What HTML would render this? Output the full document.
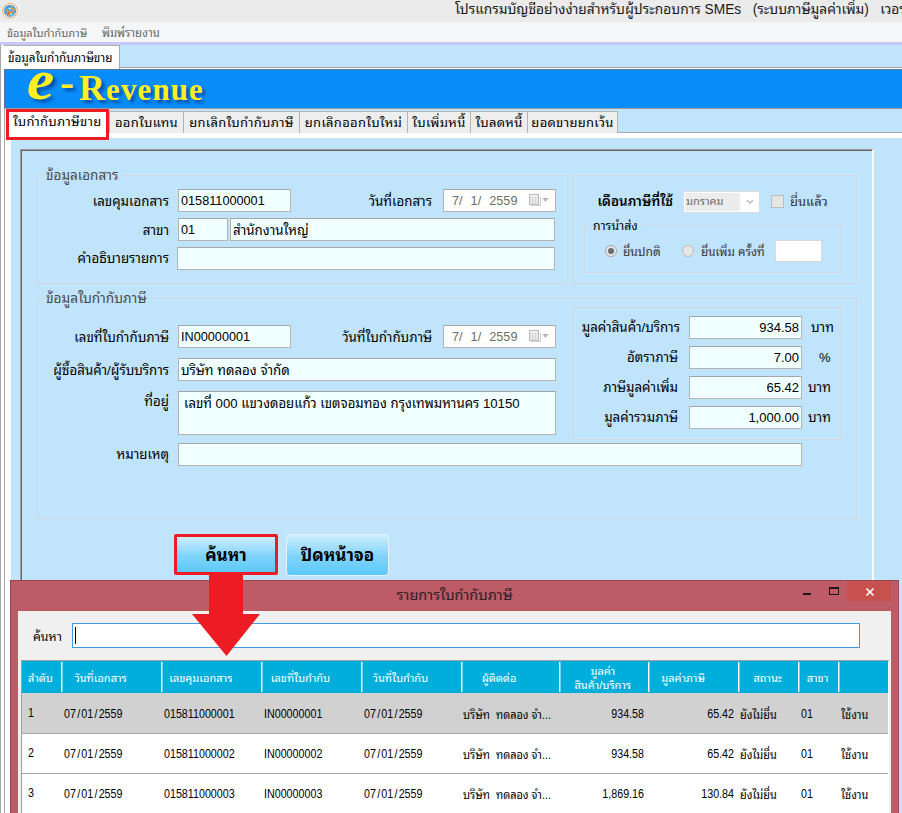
<!DOCTYPE html>
<html lang="th">
<head>
<meta charset="utf-8">
<title>e-Revenue</title>
<style>
*{box-sizing:border-box;margin:0;padding:0}
html,body{width:902px;height:813px;overflow:hidden;background:#c1e4fd}
body{position:relative;font-family:"Liberation Sans","Noto Sans Thai Looped","Loma","Noto Sans Thai","Noto Sans CJK SC",sans-serif;font-size:13px;color:#000}
.abs,.abs *{position:absolute}
.abs{left:0;top:0;width:902px;height:813px;overflow:hidden}
.t{white-space:nowrap;line-height:1}
.titlebar{left:0;top:0;width:902px;height:22px;background:#ebebeb}
.menubar{left:0;top:22px;width:902px;height:21px;background:#f5f6f8}
.inp{background:#f0ffff;border:1px solid #b7b3ae;border-top-color:#a6a6a6;height:23px}
.inp.dis{background:#fff}
.lbl{overflow-x:clip;text-align:right;white-space:nowrap;line-height:1;font-size:13.3px}
.gb{border:1px solid #d3dadf}
.tab{top:111px;height:22px;background:#eeeeee;border:1px solid #b4b4b4;border-bottom:none;font-size:13px;white-space:nowrap;text-align:center;line-height:22px;letter-spacing:.3px;overflow:hidden}
.hc{overflow-x:clip;top:662px;height:31px;color:#fff;font-size:11px;text-align:center;white-space:nowrap;line-height:32px}
.cell{font-size:12px;white-space:nowrap;line-height:1}
.cell.n{font-size:12.6px;transform:scaleX(.85);transform-origin:0 0}
.cell.th{font-size:12.2px;transform:scaleX(.9);transform-origin:0 0}
.cell i{position:static;font-style:normal;margin:0 1.45px}
.cell.n.r{text-align:right;transform-origin:100% 0}
</style>
</head>
<body>
<div class="abs">
  <!-- title bar -->
  <div class="titlebar"></div>
  <svg style="left:0;top:0" width="22" height="22" viewBox="0 0 22 22"><circle cx="10" cy="10.8" r="9.6" fill="#f7f5f6" opacity=".8"/><circle cx="10" cy="10.8" r="7.5" fill="#fbeee2" stroke="#e8873c" stroke-width="1.3" stroke-dasharray="1.1 1.25"/><circle cx="10" cy="10.8" r="6.1" fill="#3fa6e6"/><path d="M6.2 9.5l1.6 1.2-.6 3 1.8 1.6M11 6.5l.8 2.2 2.4.6-1.4 2.6 1 2.2M8.8 11.5l2.4 1.4" stroke="#ef9a3f" stroke-width="1.5" fill="none" stroke-linecap="round"/><path d="M9 8.2l2 1M10.5 13.5l1.2 1.6" stroke="#fbe9dc" stroke-width="1.1" fill="none" stroke-linecap="round"/><circle cx="8.3" cy="13.2" r=".9" fill="#d8452e"/></svg>
  <div class="t" style="left:455px;top:3px;font-size:13.75px;color:#1a1a1a;margin-left:-2px;padding:0 2px;max-width:475px;overflow-x:clip">โปรแกรมบัญชีอย่างง่ายสำหรับผู้ประกอบการ SMEs&nbsp;&nbsp; (ระบบภาษีมูลค่าเพิ่ม)&nbsp;&nbsp; เวอร์ชัน</div>
  <!-- menu bar -->
  <div class="menubar"></div>
  <div class="t" style="left:7px;top:28px;font-size:10.9px;color:#666;margin-left:-2px;padding:0 2px;max-width:88px;overflow-x:clip">ข้อมูลใบกำกับภาษี</div>
  <div class="t" style="left:102px;top:28px;font-size:11.3px;color:#666;margin-left:-2px;padding:0 2px;max-width:66px;overflow-x:clip">พิมพ์รายงาน</div>
  <div style="left:0;top:42px;width:902px;height:3px;background:#c6c9f7"></div>
  <!-- outer tab -->
  <div style="left:0;top:67px;width:902px;height:3px;background:#fff;border-top:1px solid #a0a0a0"></div>
  <div style="left:1px;top:45px;width:119px;height:25px;background:#fff;border-top:1px solid #b0b0b0;border-right:1px solid #a8a8a8"></div>
  <div class="t" style="left:8px;top:52px;font-size:11.7px;color:#000;margin-left:-2px;padding:0 2px;max-width:112px;overflow-x:clip">ข้อมูลใบกำกับภาษีขาย</div>
  <!-- banner -->
  <div style="left:4px;top:69px;width:898px;height:40px;background:#088dfb;border-top:1px solid #56789c;border-bottom:1px solid #56789c;border-left:1px solid #56789c"></div>
  <div class="t" style="left:27px;top:51px;font-family:'Liberation Serif',serif;font-style:italic;font-weight:bold;font-size:58px;color:#ffee22;text-shadow:3px 3px 3px rgba(0,20,90,.5);transform:scaleX(1.06);transform-origin:0 0">e</div>
  <div class="t" style="left:60px;top:61px;font-family:'Liberation Serif',serif;font-weight:bold;font-size:42px;color:#ffee22;text-shadow:3px 3px 3px rgba(0,20,90,.5)">-</div>
  <div class="t" style="left:79px;top:68px;font-family:'Liberation Serif',serif;font-weight:bold;font-size:31px;letter-spacing:1.1px;line-height:40px;color:#ffee22;text-shadow:3px 3px 3px rgba(0,20,90,.5)"><span style="position:static;font-size:36px">R</span>evenue</div>
  <!-- left window borders -->
  <div style="left:0;top:45px;width:4px;height:768px;background:#fff;border-left:1px solid #a6a6a6"></div>
  <div style="left:4px;top:108px;width:7px;height:705px;background:#fff;border-left:1px solid #a8a8a8"></div>
  <!-- inner tabs -->
  <div style="left:4px;top:108px;width:898px;height:1px;background:#9c9c9c"></div>
  <div style="left:5px;top:132px;width:897px;height:6px;background:#fff"></div><div style="left:109px;top:132px;width:793px;height:1px;background:#a8a8a8"></div>
  <div class="tab" style="left:109px;width:75px">ออกใบแทน</div>
  <div class="tab" style="left:183px;width:117px">ยกเลิกใบกำกับภาษี</div>
  <div class="tab" style="left:299px;width:109px">ยกเลิกออกใบใหม่</div>
  <div class="tab" style="left:407px;width:64px">ใบเพิ่มหนี้</div>
  <div class="tab" style="left:470px;width:58px">ใบลดหนี้</div>
  <div class="tab" style="left:527px;width:91px">ยอดขายยกเว้น</div>
  <div style="left:6px;top:109px;width:103px;height:31px;background:#fff;border:3px solid #ed1c24"></div>
  <div class="t" style="left:13px;top:115px;font-size:13px;letter-spacing:.25px;margin-left:-2px;padding:0 2px;max-width:96px;overflow-x:clip">ใบกำกับภาษีขาย</div>
  <!-- panel -->
  <div style="left:20px;top:149px;width:854px;height:664px;border-top:1px solid #9e9e9e;border-left:1px solid #9e9e9e;border-right:2px solid #fff"></div><div style="left:21px;top:150px;width:851px;height:663px;border-top:1px solid #666;border-left:1px solid #666"></div>
  <!-- group boxes -->
  <div class="gb" style="left:37px;top:175px;width:531px;height:109px"></div>
  <div class="t" style="left:43px;top:169px;background:#c1e4fd;padding:0 3px;font-size:13.5px;color:#4a4a4a;max-width:81px;overflow-x:clip">ข้อมูลเอกสาร</div>
  <div class="gb" style="left:573px;top:175px;width:284px;height:109px"></div>
  <div class="gb" style="left:37px;top:298px;width:820px;height:221px"></div>
  <div class="t" style="left:43px;top:292px;background:#c1e4fd;padding:0 3px;font-size:13.7px;color:#4a4a4a;max-width:110px;overflow-x:clip">ข้อมูลใบกำกับภาษี</div>
  <div class="gb" style="left:573px;top:307px;width:269px;height:133px"></div>
  <div class="gb" style="left:584px;top:225px;width:258px;height:48px"></div>
  <div class="t" style="left:590px;top:220px;background:#c1e4fd;padding:0 3px;font-size:12.3px;max-width:54px;overflow-x:clip">การนำส่ง</div>
  <!-- doc fields -->
  <div class="lbl" style="left:40px;width:129px;top:194.5px">เลขคุมเอกสาร</div>
  <div class="inp" style="left:178px;top:189px;width:113px"></div>
  <div class="t" style="left:181px;top:194.5px;font-size:12.7px">015811000001</div>
  <div class="lbl" style="left:340px;width:92px;top:194.5px">วันที่เอกสาร</div>
  <div class="inp dis" style="left:443px;top:189px;width:113px"></div>
  <div class="t" style="left:452px;top:195px;font-size:12.7px;color:#6d6d6d;word-spacing:4.5px">7/ 1/ 2559</div><svg style="left:528px;top:193px" width="22" height="14" viewBox="0 0 22 14"><rect x="1.5" y="1.5" width="9" height="10" fill="#f2f2f2" stroke="#b9b9b9"/><path d="M3 12.5H12.5V4" fill="none" stroke="#d0d0d0"/><path d="M2 4.5H10M2 7H10M2 9.5H10M4.5 4V12M7.5 4V12" stroke="#cfcfcf" stroke-width=".8" fill="none"/><path d="M14.5 5H20.5L17.5 9Z" fill="#b4b4b4"/></svg>
  <div class="lbl" style="left:40px;width:129px;top:223.5px">สาขา</div>
  <div class="inp" style="left:178px;top:218px;width:50px"></div>
  <div class="t" style="left:181px;top:223.5px;font-size:12.7px">01</div>
  <div class="inp" style="left:230px;top:218px;width:325px"></div>
  <div class="t" style="left:233px;top:223.5px;font-size:13.3px;margin-left:-2px;padding:0 2px;max-width:84px;overflow-x:clip">สำนักงานใหญ่</div>
  <div class="lbl" style="left:40px;width:129px;top:252px">คำอธิบายรายการ</div>
  <div class="inp" style="left:177px;top:247px;width:378px"></div>
  <!-- tax month -->
  <div class="lbl" style="left:580px;width:93px;top:195px;font-weight:600;font-size:13.4px">เดือนภาษีที่ใช้</div>
  <div style="left:683px;top:191px;width:77px;height:22px;background:#fff;border:1px solid #dcdcdc"></div><div style="left:685px;top:193px;width:55px;height:18px;background:#ececec"></div>
  <div class="t" style="left:686px;top:196px;font-size:11px;color:#6d6d6d;margin-left:-2px;padding:0 2px;max-width:46px;overflow-x:clip">มกราคม</div>
  <svg style="left:745px;top:198px" width="10" height="8" viewBox="0 0 10 8"><path d="M2 2 L5 5.2 L8 2" fill="none" stroke="#b4b4b4" stroke-width="1.2"/></svg>
  <div style="left:771px;top:195px;width:13px;height:13px;background:#e6e6e6;border:1px solid #bcbcbc"></div>
  <div class="t" style="left:790px;top:195px;font-size:13px;color:#333;margin-left:-2px;padding:0 2px;max-width:46px;overflow-x:clip">ยื่นแล้ว</div>
  <div style="left:605px;top:245px;width:12px;height:12px;border-radius:50%;background:#e6e6e6;border:1px solid #a8a8a8"></div>
  <div style="left:608px;top:248px;width:6px;height:6px;border-radius:50%;background:#6a6a6a"></div>
  <div class="t" style="left:623px;top:246px;font-size:12px;color:#333;margin-left:-2px;padding:0 2px;max-width:46px;overflow-x:clip">ยื่นปกติ</div>
  <div style="left:682px;top:245px;width:12px;height:12px;border-radius:50%;background:#e6e6e6;border:1px solid #bcbcbc"></div>
  <div class="t" style="left:701px;top:246px;font-size:11.7px;color:#333;margin-left:-2px;padding:0 2px;max-width:72px;overflow-x:clip">ยื่นเพิ่ม ครั้งที่</div>
  <div style="left:775px;top:240px;width:47px;height:22px;background:#fff;border:1px solid #d9d9d9"></div>
  <!-- invoice fields -->
  <div class="lbl" style="left:40px;width:129px;top:330.5px">เลขที่ใบกำกับภาษี</div>
  <div class="inp" style="left:178px;top:325px;width:113px"></div>
  <div class="t" style="left:181px;top:330.5px;font-size:12.7px">IN00000001</div>
  <div class="lbl" style="left:320px;width:112px;top:330.5px">วันที่ใบกำกับภาษี</div>
  <div class="inp dis" style="left:443px;top:325px;width:113px"></div>
  <div class="t" style="left:452px;top:331px;font-size:12.7px;color:#6d6d6d;word-spacing:4.5px">7/ 1/ 2559</div><svg style="left:528px;top:329px" width="22" height="14" viewBox="0 0 22 14"><rect x="1.5" y="1.5" width="9" height="10" fill="#f2f2f2" stroke="#b9b9b9"/><path d="M3 12.5H12.5V4" fill="none" stroke="#d0d0d0"/><path d="M2 4.5H10M2 7H10M2 9.5H10M4.5 4V12M7.5 4V12" stroke="#cfcfcf" stroke-width=".8" fill="none"/><path d="M14.5 5H20.5L17.5 9Z" fill="#b4b4b4"/></svg>
  <div class="lbl" style="left:40px;width:129px;top:363.5px">ผู้ซื้อสินค้า/ผู้รับบริการ</div>
  <div class="inp" style="left:178px;top:358px;width:378px"></div>
  <div class="t" style="left:181px;top:363.5px;font-size:13.3px;margin-left:-2px;padding:0 2px;max-width:117px;overflow-x:clip">บริษัท ทดลอง จำกัด</div>
  <div class="lbl" style="left:40px;width:129px;top:395px">ที่อยู่</div>
  <div class="inp" style="left:178px;top:391px;width:378px;height:44px"></div>
  <div class="t" style="left:184px;top:397px;font-size:13.2px;margin-left:-2px;padding:0 2px;max-width:344px;overflow-x:clip">เลขที่ 000 แขวงดอยแก้ว เขตจอมทอง กรุงเทพมหานคร 10150</div>
  <div class="lbl" style="left:40px;width:129px;top:448px">หมายเหตุ</div>
  <div class="inp" style="left:178px;top:443px;width:624px"></div>
  <!-- amounts -->
  <div class="lbl" style="left:560px;width:120px;top:321px">มูลค่าสินค้า/บริการ</div>
  <div class="inp" style="left:689px;top:316px;width:113px"></div>
  <div class="t" style="left:689px;width:110px;text-align:right;top:321px;font-size:13px">934.58</div>
  <div class="t" style="left:811px;top:321px;font-size:13.3px;margin-left:-2px;padding:0 2px;max-width:31px;overflow-x:clip">บาท</div>
  <div class="lbl" style="left:560px;width:118px;top:351px">อัตราภาษี</div>
  <div class="inp" style="left:689px;top:346px;width:113px"></div>
  <div class="t" style="left:689px;width:110px;text-align:right;top:351px;font-size:13px">7.00</div>
  <div class="t" style="left:819px;top:351px;font-size:13px">%</div>
  <div class="lbl" style="left:560px;width:118px;top:381px">ภาษีมูลค่าเพิ่ม</div>
  <div class="inp" style="left:689px;top:376px;width:113px"></div>
  <div class="t" style="left:689px;width:110px;text-align:right;top:381px;font-size:13px">65.42</div>
  <div class="t" style="left:808px;top:381px;font-size:13.3px;margin-left:-2px;padding:0 2px;max-width:31px;overflow-x:clip">บาท</div>
  <div class="lbl" style="left:560px;width:118px;top:411px">มูลค่ารวมภาษี</div>
  <div class="inp" style="left:689px;top:406px;width:113px"></div>
  <div class="t" style="left:689px;width:110px;text-align:right;top:411px;font-size:13px">1,000.00</div>
  <div class="t" style="left:808px;top:411px;font-size:13.3px;margin-left:-2px;padding:0 2px;max-width:31px;overflow-x:clip">บาท</div>
  <!-- buttons -->
  <div style="left:174px;top:534px;width:104px;height:41px;background:linear-gradient(#cdeeff,#7fd3fb 55%,#5cc9fa);border:3px solid #ed1c24;border-radius:2px"></div>
  <div class="t" style="left:174px;width:104px;text-align:center;top:547px;font-size:17px;font-weight:bold;overflow-x:clip">ค้นหา</div>
  <div style="left:286px;top:534px;width:103px;height:42px;background:linear-gradient(#cdeeff,#7fd3fb 55%,#5cc9fa);border:1px solid #e4f3fc;border-radius:4px"></div>
  <div class="t" style="left:286px;width:103px;text-align:center;top:547px;font-size:17px;font-weight:bold;overflow-x:clip">ปิดหน้าจอ</div>
  <!-- dialog -->
  <div style="left:10px;top:580px;width:889px;height:233px;background:#bd5b66;border-top:1px solid #9a4650;border-left:1px solid #9a4650;border-right:1px solid #a24c57"></div>
  <div class="t" style="left:10px;width:889px;text-align:center;top:588px;font-size:14.5px;color:#2e2024;overflow-x:clip">รายการใบกำกับภาษี</div>
  <div style="left:803px;top:593px;width:8px;height:2px;background:#1a1a1a"></div>
  <div style="left:829px;top:587px;width:10px;height:8px;border:1px solid #1a1a1a;border-top-width:2px"></div>
  <div style="left:847px;top:581px;width:44px;height:20px;background:#c8504f"></div>
  <svg style="left:865px;top:587px" width="10" height="10" viewBox="0 0 10 10"><path d="M1.5 1.5 L8.5 8.5 M8.5 1.5 L1.5 8.5" stroke="#fff" stroke-width="1.6" fill="none"/></svg>
  <div style="left:18px;top:611px;width:873px;height:202px;background:#f0f0f0"></div>
  <div class="t" style="left:33px;top:631px;font-size:12.4px;margin-left:-2px;padding:0 2px;max-width:37px;overflow-x:clip">ค้นหา</div>
  <div style="left:72px;top:623px;width:788px;height:25px;background:#fff;border:1px solid #3f9be6"></div>
  <div style="left:75px;top:627px;width:1px;height:17px;background:#000"></div>
  <!-- grid -->
  <div style="left:21px;top:660px;width:868px;height:153px;background:#fff;border-top:1px solid #a0a0a0;border-left:1px solid #a0a0a0"></div>
  <div style="left:22px;top:661px;width:866px;height:32px;background:#00aedb"></div>
  <div class="hc" style="left:24.0px;width:33.0px">ลำดับ</div>
  <div class="hc" style="left:63.0px;width:75.2px">วันที่เอกสาร</div>
  <div class="hc" style="left:163.0px;width:75.6px">เลขคุมเอกสาร</div>
  <div class="hc" style="left:263.0px;width:75.0px">เลขที่ใบกำกับ</div>
  <div class="hc" style="left:363.0px;width:74.8px">วันที่ใบกำกับ</div>
  <div class="hc" style="left:463.0px;width:72.0px">ผู้ติดต่อ</div>
  <div class="hc" style="left:560.5px;width:84.6px;line-height:14px;padding-top:2px">มูลค่า<br>สินค้า/บริการ</div>
  <div class="hc" style="left:650.0px;width:66.2px">มูลค่าภาษี</div>
  <div class="hc" style="left:740.0px;width:55.8px">สถานะ</div>
  <div class="hc" style="left:800.0px;width:35.0px">สาขา</div>
  <div style="left:61px;top:662px;width:2px;height:30px;background:linear-gradient(90deg,#fff 50%,rgba(255,255,255,.45) 50%)"></div>
  <div style="left:161px;top:662px;width:2px;height:30px;background:linear-gradient(90deg,#fff 50%,rgba(255,255,255,.45) 50%)"></div>
  <div style="left:261px;top:662px;width:2px;height:30px;background:linear-gradient(90deg,#fff 50%,rgba(255,255,255,.45) 50%)"></div>
  <div style="left:361px;top:662px;width:2px;height:30px;background:linear-gradient(90deg,#fff 50%,rgba(255,255,255,.45) 50%)"></div>
  <div style="left:461px;top:662px;width:2px;height:30px;background:linear-gradient(90deg,#fff 50%,rgba(255,255,255,.45) 50%)"></div>
  <div style="left:558.5px;top:662px;width:2px;height:30px;background:linear-gradient(90deg,#fff 50%,rgba(255,255,255,.45) 50%)"></div>
  <div style="left:648px;top:662px;width:2px;height:30px;background:linear-gradient(90deg,#fff 50%,rgba(255,255,255,.45) 50%)"></div>
  <div style="left:738px;top:662px;width:2px;height:30px;background:linear-gradient(90deg,#fff 50%,rgba(255,255,255,.45) 50%)"></div>
  <div style="left:798px;top:662px;width:2px;height:30px;background:linear-gradient(90deg,#fff 50%,rgba(255,255,255,.45) 50%)"></div>
  <div style="left:838px;top:662px;width:2px;height:30px;background:linear-gradient(90deg,#fff 50%,rgba(255,255,255,.45) 50%)"></div>
  <div style="left:22px;top:693px;width:866px;height:40px;background:#d1d1d1"></div>
  <div style="left:22px;top:733px;width:866px;height:1px;background:#a6a6a6"></div>
  <div style="left:22px;top:773px;width:866px;height:1px;background:#a6a6a6"></div>
  <div class="cell n" style="left:28px;top:707px">1</div>
  <div class="cell n" style="left:64px;top:708px">07<i>/</i>01<i>/</i>2559</div>
  <div class="cell n" style="left:164px;top:708px">015811000001</div>
  <div class="cell n" style="left:264px;top:708px">IN00000001</div>
  <div class="cell n" style="left:364px;top:708px">07<i>/</i>01<i>/</i>2559</div>
  <div class="cell th" style="left:463px;top:709px;max-width:101px;overflow-x:clip">บริษัท&nbsp; ทดลอง จำ...</div>
  <div class="cell n r" style="left:560px;width:84px;top:708px">934.58</div>
  <div class="cell n r" style="left:650px;width:84px;top:708px">65.42</div>
  <div class="cell th" style="left:740px;top:709px;max-width:44px;overflow-x:clip">ยังไม่ยื่น</div>
  <div class="cell n" style="left:801px;top:708px">01</div>
  <div class="cell th" style="left:841px;top:709px;max-width:33px;overflow-x:clip">ใช้งาน</div>
  <div class="cell n" style="left:28px;top:747px">2</div>
  <div class="cell n" style="left:64px;top:748px">07<i>/</i>01<i>/</i>2559</div>
  <div class="cell n" style="left:164px;top:748px">015811000002</div>
  <div class="cell n" style="left:264px;top:748px">IN00000002</div>
  <div class="cell n" style="left:364px;top:748px">07<i>/</i>01<i>/</i>2559</div>
  <div class="cell th" style="left:463px;top:749px;max-width:101px;overflow-x:clip">บริษัท&nbsp; ทดลอง จำ...</div>
  <div class="cell n r" style="left:560px;width:84px;top:748px">934.58</div>
  <div class="cell n r" style="left:650px;width:84px;top:748px">65.42</div>
  <div class="cell th" style="left:740px;top:749px;max-width:44px;overflow-x:clip">ยังไม่ยื่น</div>
  <div class="cell n" style="left:801px;top:748px">01</div>
  <div class="cell th" style="left:841px;top:749px;max-width:33px;overflow-x:clip">ใช้งาน</div>
  <div class="cell n" style="left:28px;top:787px">3</div>
  <div class="cell n" style="left:64px;top:788px">07<i>/</i>01<i>/</i>2559</div>
  <div class="cell n" style="left:164px;top:788px">015811000003</div>
  <div class="cell n" style="left:264px;top:788px">IN00000003</div>
  <div class="cell n" style="left:364px;top:788px">07<i>/</i>01<i>/</i>2559</div>
  <div class="cell th" style="left:463px;top:789px;max-width:101px;overflow-x:clip">บริษัท&nbsp; ทดลอง จำ...</div>
  <div class="cell n r" style="left:560px;width:84px;top:788px">1,869.16</div>
  <div class="cell n r" style="left:650px;width:84px;top:788px">130.84</div>
  <div class="cell th" style="left:740px;top:789px;max-width:44px;overflow-x:clip">ยังไม่ยื่น</div>
  <div class="cell n" style="left:801px;top:788px">01</div>
  <div class="cell th" style="left:841px;top:789px;max-width:33px;overflow-x:clip">ใช้งาน</div>
  <!-- arrow -->
  <svg style="left:185px;top:572px" width="84" height="90" viewBox="0 0 84 90"><path d="M24 0 H58 V42 H75 L41.5 84 L7 42 H24 Z" fill="#ed1c24"/></svg>
</div>
</body>
</html>
